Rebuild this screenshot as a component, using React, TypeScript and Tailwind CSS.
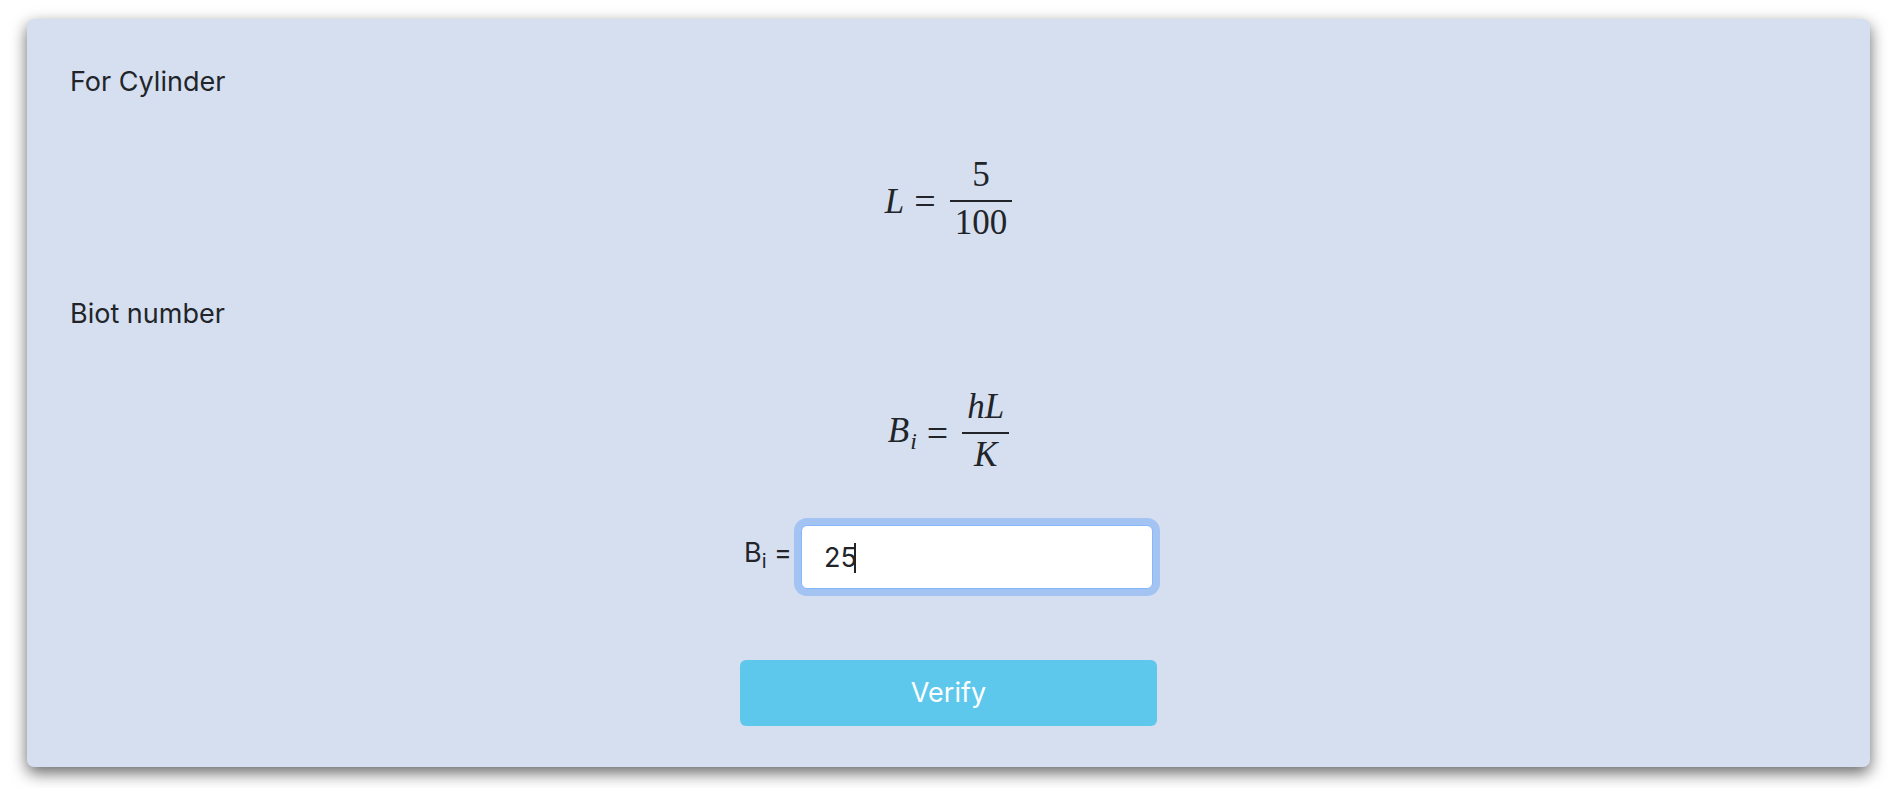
import React, { useState } from "react";

const sans = "font-['Inter','Liberation_Sans',sans-serif]";
const serif = "font-['Liberation_Serif','DejaVu_Serif',serif]";

// display fraction, bar sits 43px below the top of the block
const Frac: React.FC<{ num: React.ReactNode; den: React.ReactNode }> = ({ num, den }) => (
    <span className="inline-flex flex-col items-center ml-[4px]">
        <span className="h-[43px] pb-[8px] px-[5px] flex items-end leading-none">{num}</span>
        <span className="h-[2px] self-stretch bg-[#212529]" />
        <span className="h-[43px] pt-[3px] px-[5px] flex items-start leading-none">{den}</span>
    </span>
);

const Equation: React.FC<{ lhs: React.ReactNode; num: React.ReactNode; den: React.ReactNode; className?: string }> = ({ lhs, num, den, className }) => (
    <div className={`flex justify-center ${className ?? ""}`}>
        <div className={`flex items-center text-[35px] text-[#212529] ${serif}`}>
            <span className="leading-none">{lhs}</span>
            <span className="leading-none mx-[10px] text-[38px]">=</span>
            <Frac num={num} den={den} />
        </div>
    </div>
);

export default function App() {
    const [value, setValue] = useState("25");

    return (
        <div className="min-h-[788px] bg-white pt-[19px] pb-[21px]">
            <div className={`ml-[27px] mr-[22px] bg-[#d6dff0] rounded-[7px] shadow-[0_6px_16px_rgba(0,0,0,0.6)] px-[43px] pt-[43px] pb-[41px] text-[#212529] ${sans}`}>
                <p className="text-[27px] leading-[40px]">For Cylinder</p>

                <Equation
                    className="mt-[55px]"
                    lhs={<i>L</i>}
                    num={<span>5</span>}
                    den={<span>100</span>}
                />

                <p className="mt-[49px] text-[27px] leading-[40px]">Biot number</p>

                <Equation
                    className="mt-[55px]"
                    lhs={
                        <span>
                            <i>B</i>
                            <i className="text-[24px] align-[-0.3em] ml-[1px]">i</i>
                        </span>
                    }
                    num={<i>hL</i>}
                    den={<i>K</i>}
                />

                <div className="mt-[48px] flex justify-center items-center">
                    <label htmlFor="bi" className="text-[27px] leading-[40px] whitespace-nowrap">
                        B<span className="text-[20px] align-[-0.3em]">i</span> =
                    </label>
                    <div className="relative ml-[9px]">
                        <input
                            id="bi"
                            type="text"
                            value={value}
                            onChange={(e) => setValue(e.target.value)}
                            className="w-[352px] h-[64px] bg-white border border-[#86b7fe] rounded-[6px] pl-[22px] text-[27px] text-[#212529] outline-none shadow-[0_0_0_7px_rgba(13,110,253,0.25)] caret-transparent"
                        />
                        {/* text caret */}
                        <span className="absolute left-[53px] top-[18px] h-[30px] w-[2px] bg-[#212529]" />
                    </div>
                </div>

                <div className="mt-[71px] flex justify-center">
                    <button
                        type="button"
                        className="w-[417px] h-[66px] rounded-[6px] bg-[#5ec8ec] text-white text-[27px] hover:bg-[#4bbfe6]"
                    >
                        Verify
                    </button>
                </div>
            </div>
        </div>
    );
}
